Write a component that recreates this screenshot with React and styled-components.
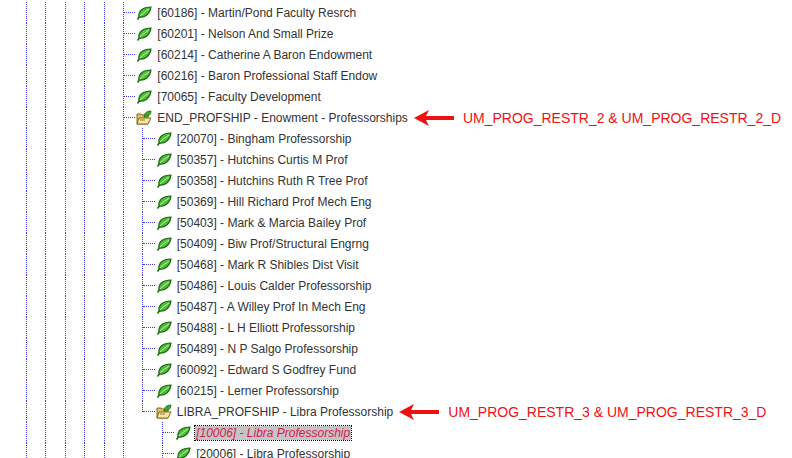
import styled, { createGlobalStyle } from "styled-components";

const Global = createGlobalStyle`
  body { margin: 0; background: #fff; font-family: "Liberation Sans", Arial, sans-serif; }
`;

const Tree = styled.div`
  padding: 2px 0 0 17px;
  height: 458px;
  overflow: hidden;
  box-sizing: border-box;
`;

const Row = styled.div`
  display: flex;
  align-items: center;
  height: 21px;
`;

const Cell = styled.div`
  position: relative;
  width: 19.4px;
  height: 21px;
  flex: none;
  &::before {
    content: "";
    position: absolute;
    left: 9px;
    top: 0;
    height: ${(p) => (p.line === "ell" ? "11px" : p.line === "none" ? "0" : "21px")};
    border-left: 1px dotted #3b3bdd;
  }
  &::after {
    content: "";
    display: ${(p) => (p.line === "tee" || p.line === "ell" ? "block" : "none")};
    position: absolute;
    left: 10px;
    right: -2px;
    top: 10px;
    border-top: 1px dotted #3b3bdd;
  }
`;

const Icon = styled.svg`
  flex: none;
  margin-left: 3px;
  margin-right: 4px;
`;

const Label = styled.span`
  font-size: 12px;
  color: ${(p) => (p.selected ? "#d81b50" : "#333")};
  font-style: ${(p) => (p.selected ? "italic" : "normal")};
  background: ${(p) => (p.selected ? "#c4c4c4" : "transparent")};
  outline: ${(p) => (p.selected ? "1px dotted #000" : "none")};
  padding: 0 1px;
  white-space: nowrap;
`;

const Note = styled.div`
  display: flex;
  align-items: center;
  margin-left: 5px;
  gap: 9px;
  color: #f01010;
  font-size: 14px;
  white-space: nowrap;
`;

const Leaf = () => (
  <Icon width="16" height="16" viewBox="0 0 16 16">
    <path d="M1.5 14.5 L4 11" stroke="#1d6b12" strokeWidth="1.6" fill="none" />
    <path d="M3 12 C2 6 7 2 15 2 C14 9 9 13 3 12 Z" fill="#4fbf3a" stroke="#1d6b12" strokeWidth="1.2" />
    <path d="M4 11 C7 8 10 6 13 4" stroke="#c8f0b0" strokeWidth="1" fill="none" />
  </Icon>
);

const Folder = () => (
  <Icon width="16" height="16" viewBox="0 0 16 16">
    <path d="M1 4 H5 L6 5 H12 V14 H1 Z" fill="#e8c060" stroke="#7a5a10" strokeWidth="0.9" />
    <path d="M3 8 H15 L12 14 H1 Z" fill="#fbe7a0" stroke="#7a5a10" strokeWidth="0.9" />
    <path d="M4 10 H9" stroke="#7a5a10" strokeWidth="0.8" />
    <path d="M8 7 C8 3 11 1 15 1 C15 5 12 7 8 7 Z" fill="#3aa52c" stroke="#1d6b12" strokeWidth="0.8" />
  </Icon>
);

const Arrow = () => (
  <svg width="40" height="16" viewBox="0 0 40 16">
    <path d="M0 8 L15 0 L12 6 H40 V10 H12 L15 16 Z" fill="#ee1111" />
  </svg>
);

const rows = [
  { cells: "ppppp t", text: "[60186] - Martin/Pond Faculty Resrch" },
  { cells: "ppppp t", text: "[60201] - Nelson And Small Prize" },
  { cells: "ppppp t", text: "[60214] - Catherine A Baron Endowment" },
  { cells: "ppppp t", text: "[60216] - Baron Professional Staff Endow" },
  { cells: "ppppp t", text: "[70065] - Faculty Development" },
  { cells: "ppppp t", text: "END_PROFSHIP - Enowment - Professorships", folder: true, note: "UM_PROG_RESTR_2 & UM_PROG_RESTR_2_D" },
  ...[
    "[20070] - Bingham Professorship",
    "[50357] - Hutchins Curtis M Prof",
    "[50358] - Hutchins Ruth R Tree Prof",
    "[50369] - Hill Richard Prof Mech Eng",
    "[50403] - Mark & Marcia Bailey Prof",
    "[50409] - Biw Prof/Structural Engrng",
    "[50468] - Mark R Shibles Dist Visit",
    "[50486] - Louis Calder Professorship",
    "[50487] - A Willey Prof In Mech Eng",
    "[50488] - L H Elliott Professorship",
    "[50489] - N P Salgo Professorship",
    "[60092] - Edward S Godfrey Fund",
    "[60215] - Lerner Professorship",
  ].map((text) => ({ cells: "pppppp t", text })),
  { cells: "pppppp e", text: "LIBRA_PROFSHIP - Libra Professorship", folder: true, note: "UM_PROG_RESTR_3 & UM_PROG_RESTR_3_D" },
  { cells: "pppppp n t", text: "[10006] - Libra Professorship", selected: true },
  { cells: "pppppp n t", text: "[20006] - Libra Professorship" },
];

const kinds = { p: "pipe", t: "tee", e: "ell", n: "none" };

export default function App() {
  return (
    <>
      <Global />
      <Tree>
        {rows.map((r, i) => (
          <Row key={i}>
            {r.cells.replace(/ /g, "").split("").map((c, j) => (
              <Cell key={j} line={kinds[c]} />
            ))}
            {r.folder ? <Folder /> : <Leaf />}
            <Label selected={r.selected}>{r.text}</Label>
            {r.note && (
              <Note>
                <Arrow />
                {r.note}
              </Note>
            )}
          </Row>
        ))}
      </Tree>
    </>
  );
}
